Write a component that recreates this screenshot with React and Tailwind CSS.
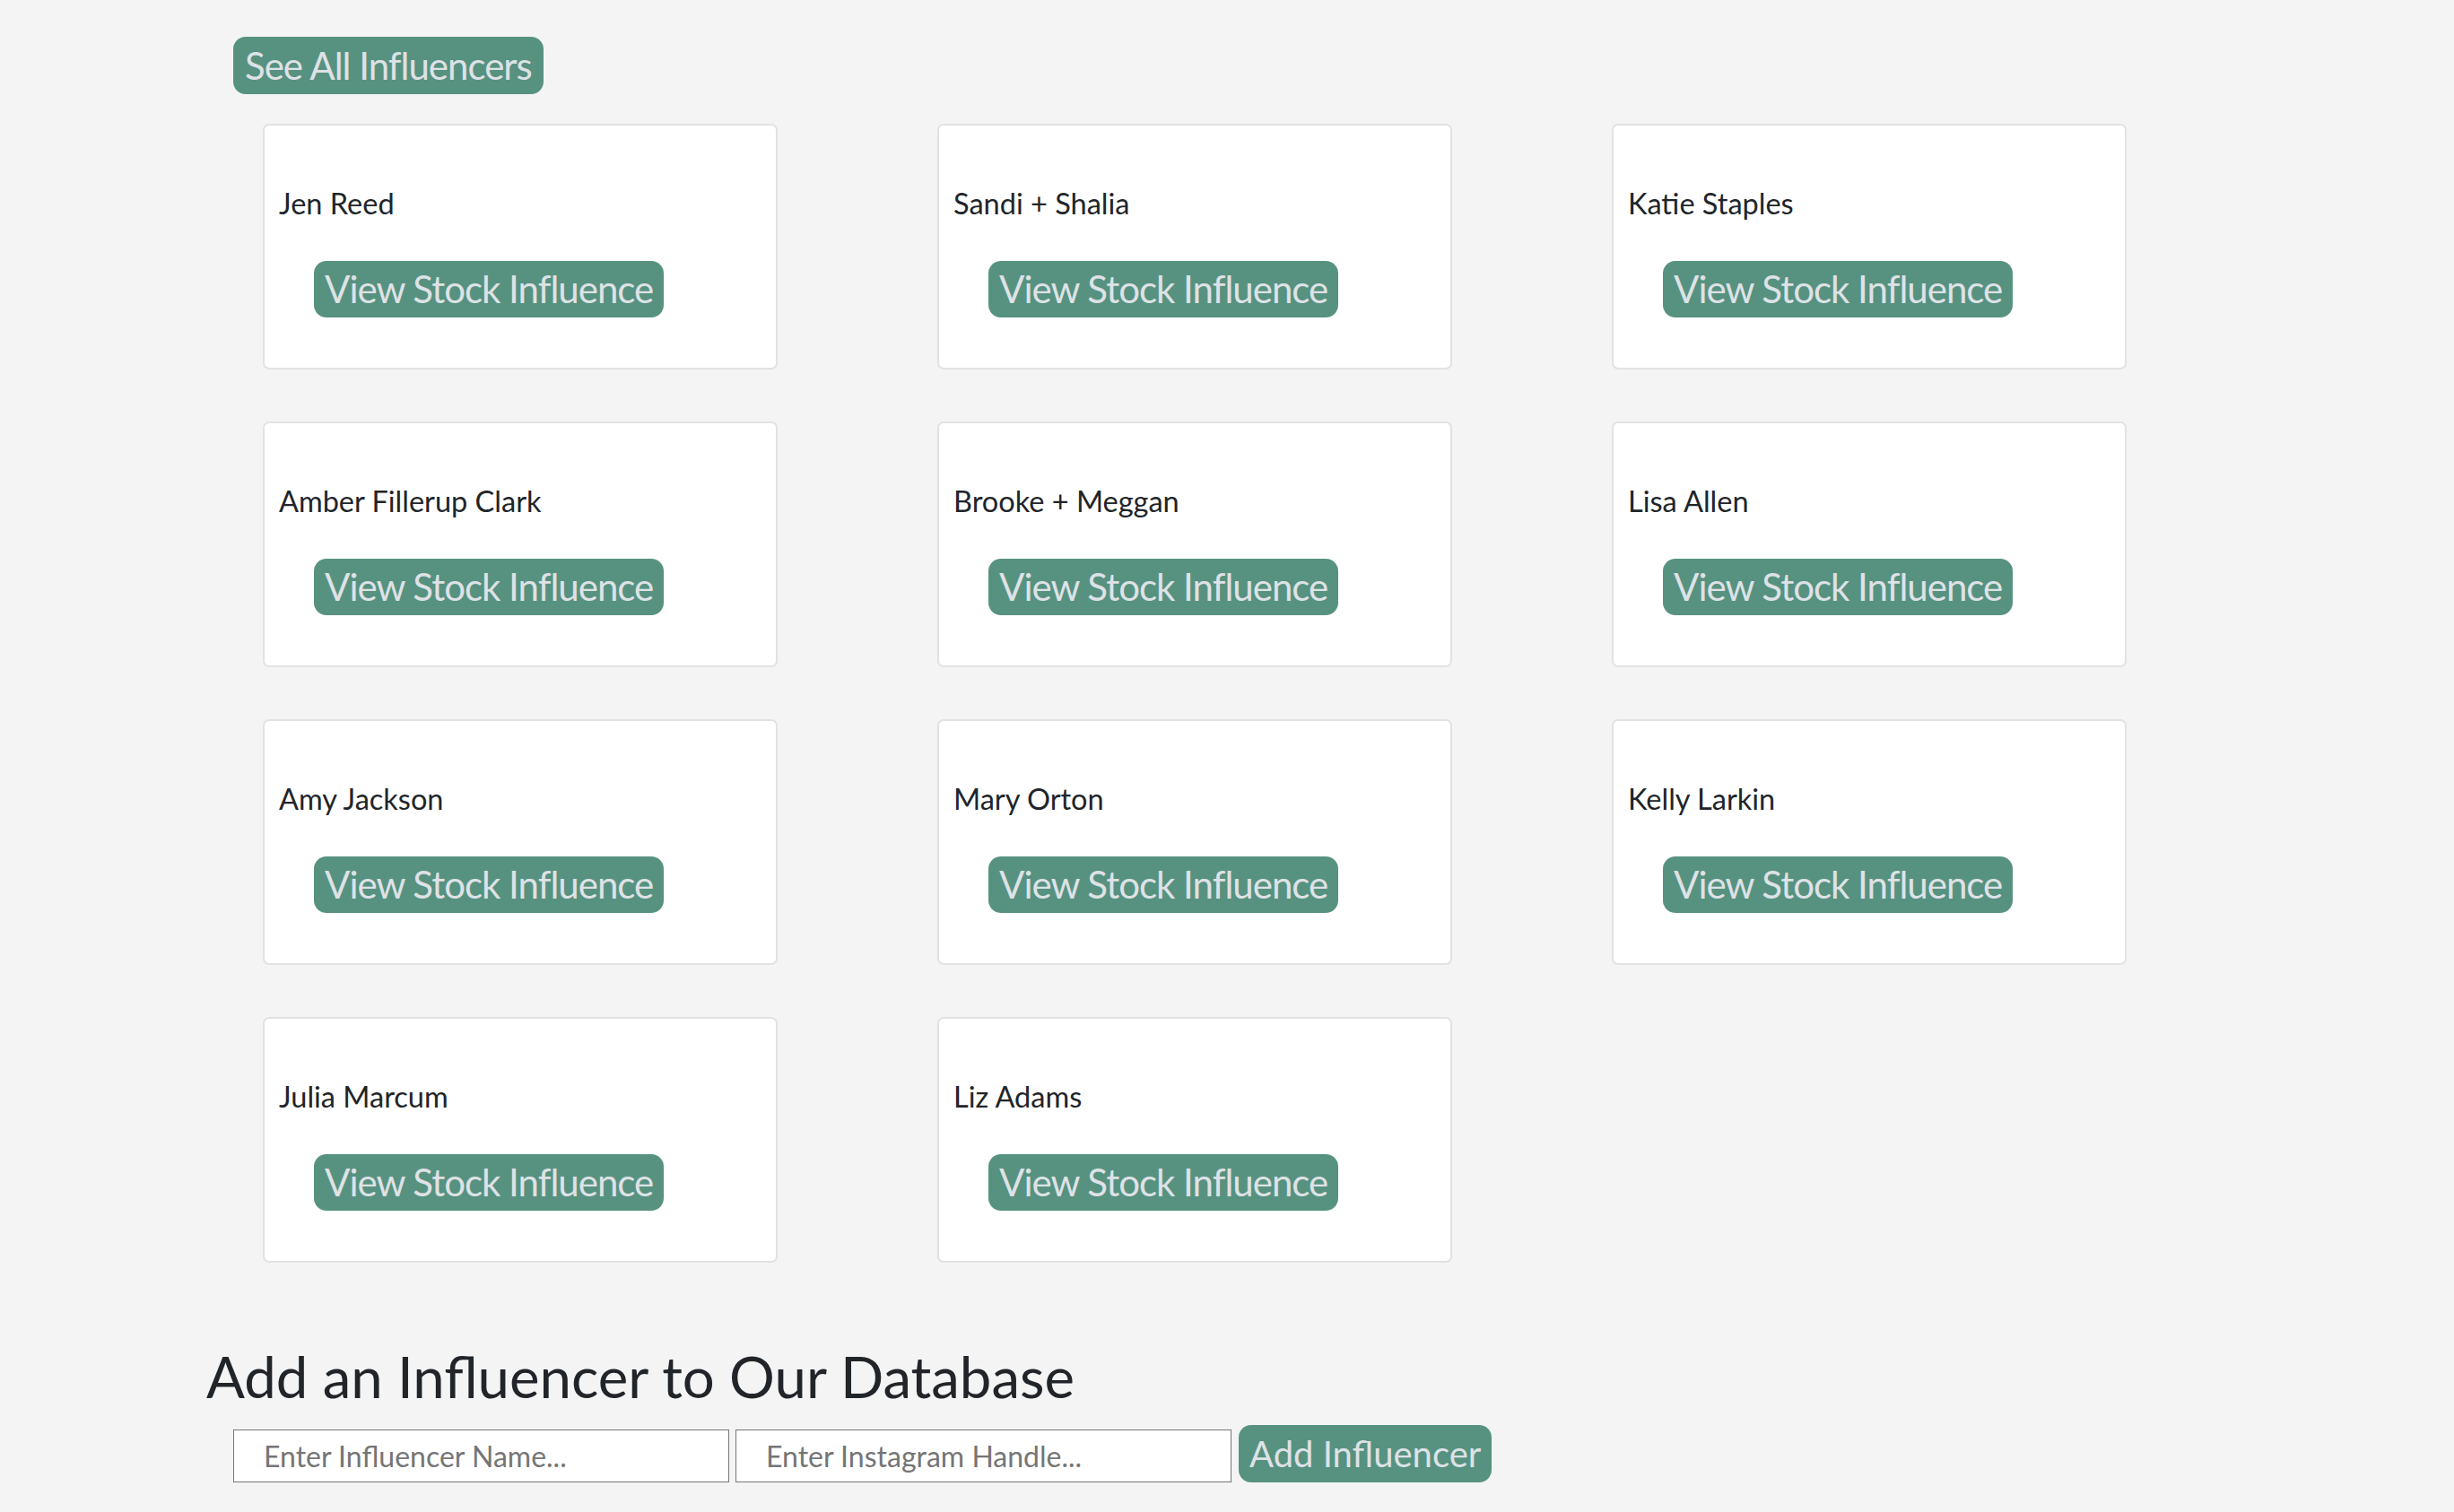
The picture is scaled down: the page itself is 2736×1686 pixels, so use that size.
import React from 'react'

const influencers = [
  'Jen Reed',
  'Sandi + Shalia',
  'Katie Staples',
  'Amber Fillerup Clark',
  'Brooke + Meggan',
  'Lisa Allen',
  'Amy Jackson',
  'Mary Orton',
  'Kelly Larkin',
  'Julia Marcum',
  'Liz Adams',
]

const InfluencerCard = ({ name }) => {
  return (
    <div className="h-[274px] bg-white border-2 border-[#e2e2e2] rounded-[7px] pl-[16px] pt-[63px] flex flex-col items-start">
      <p className="text-[32.5px] leading-[47px] text-[#212529]">{name}</p>
      <button className="mt-[41px] ml-[39px] bg-[#579280] text-[#dee2e6] text-[42px] leading-[63px] tracking-[-1px] px-[12px] rounded-[14px]">
        View Stock Influence
      </button>
    </div>
  )
}

const App = () => {
  return (
    <div className="min-h-screen bg-[#f4f4f4] font-['Lato',sans-serif] pt-[41px] pb-[40px]">
      <div className="pl-[260px]">
        <button className="bg-[#579280] text-[#dee2e6] text-[42px] leading-[64px] tracking-[-1px] px-[13px] rounded-[14px]">
          See All Influencers
        </button>
      </div>

      <div className="grid grid-cols-[repeat(3,574px)] gap-x-[178px] gap-y-[58px] pl-[293px] mt-[33px]">
        {influencers.map((name, key) => (
          <InfluencerCard key={key} name={name} />
        ))}
      </div>

      <h2 className="pl-[230px] mt-[88px] text-[63.5px] leading-[77px] text-[#212529]">
        Add an Influencer to Our Database
      </h2>

      <div className="flex items-end gap-[7px] pl-[260px] mt-[16px]">
        <input
          type="text"
          placeholder="Enter Influencer Name..."
          className="w-[553px] h-[59px] bg-white border border-[#767676] pl-[33px] text-[32px] placeholder:text-[#757575] outline-none"
        />
        <input
          type="text"
          placeholder="Enter Instagram Handle..."
          className="w-[553px] h-[59px] bg-white border border-[#767676] pl-[33px] text-[32px] placeholder:text-[#757575] outline-none"
        />
        <button className="bg-[#579280] text-[#dee2e6] text-[40px] leading-[64px] px-[12px] rounded-[14px] ml-[1px]">
          Add Influencer
        </button>
      </div>
    </div>
  )
}

export default App
